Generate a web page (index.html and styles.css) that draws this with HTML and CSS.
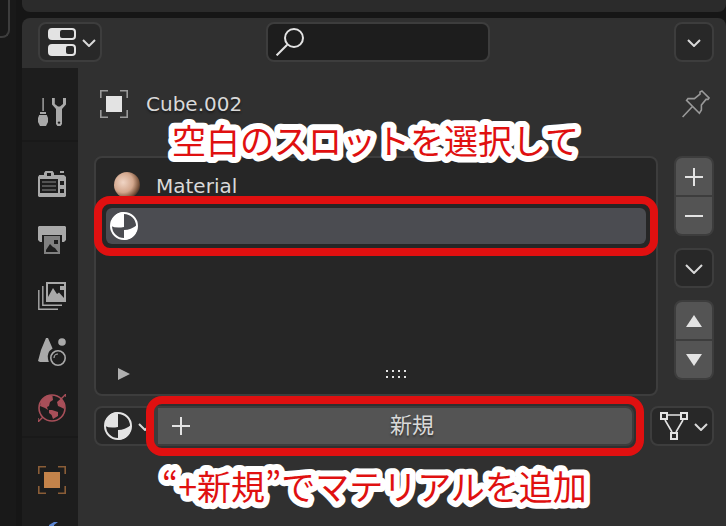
FILE: index.html
```html
<!DOCTYPE html>
<html lang="ja">
<head>
<meta charset="utf-8">
<title>Material Properties</title>
<link rel="stylesheet" href="styles.css">
</head>
<body>
<div class="app">
  <div class="side-area"><div class="side-button"></div></div>
  <div class="areas">
    <div class="upper-area"></div>
    <div class="editor">
      <header class="header">
        <div class="header-side">
          <button class="button menu-button" aria-label="Editor type">
            <svg class="icon" viewBox="0 0 14 14"><rect width="14" height="6" rx="2" fill="#e3e3e3"/><rect x="6" y="1" width="7" height="4" rx="1" fill="#282828"/><rect y="8" width="14" height="6" rx="2" fill="#e3e3e3"/><rect x="9" y="9" width="4" height="4" rx="1" fill="#282828"/></svg>
            <svg class="chevron" viewBox="0 0 14 8"><path d="M1 1l6 6 6-6"/></svg>
          </button>
        </div>
        <label class="search">
          <svg class="icon line" viewBox="0 0 14 14"><circle cx="9" cy="5" r="4.500"/><path d="M5.600 8.400L.3 13.700"/></svg>
          <input type="text" aria-label="Search">
        </label>
        <div class="header-side end">
          <button class="button square" aria-label="Options"><svg class="chevron" viewBox="0 0 14 8"><path d="M1 1l6 6 6-6"/></svg></button>
        </div>
      </header>
      <div class="body">
        <nav class="tabs">
          <div class="tab-group">
            <button class="tab" aria-label="Tool"><svg class="icon" viewBox="0 0 14 14" fill="#a9a9a9"><path d="M2.200 0h.7v6.500h-.7zM1 7h3v1H1zM.6 8.500h3.800L5 10v2l-1 2H1l-1-2v-2zM7 0h1.400v3L10 4.200h1L12.500 3V0H14v3.200L12 5.500V13l-.7 1H9.700L9 13V5.500L7 3.200z"/><circle cx="10.500" cy="12.300" r=".6" fill="#1d1d1d"/></svg></button>
          </div>
          <div class="tab-group">
            <button class="tab" aria-label="Render"><svg class="icon" viewBox="0 0 14 14" fill="#a9a9a9"><path d="M3 1.500L3.700.5h3.600L8 1.500V2.500h5l1 1V13l-.5.5H.5L0 13V3.500L.6 2.500H3zM11 .5h2v1h-2z"/><path fill="#1d1d1d" d="M4.500 1.500h2v1.500h-2zM1 4.500h9v7H1zM11 5.500h2v2h-2zM11 9.500h2v2h-2z"/><path stroke="#666" stroke-width=".7" d="M2 6h7M2 8h7M2 10h7"/></svg></button>
            <button class="tab" aria-label="Output"><svg class="icon" viewBox="0 0 14 14"><path fill="#a9a9a9" d="M.5 0h13l.5.5V7l-1 1h-1V4.500H2V8H1L0 7V.5z"/><path fill="#808080" d="M3 5h8v9H3z"/><path fill="#1d1d1d" d="M4 13v-1l2-3 1.500 1.500L8.500 11 10 13zM8 7h2v2H8z"/></svg></button>
            <button class="tab" aria-label="View layer"><svg class="icon" viewBox="0 0 14 14" fill="none" stroke="#a9a9a9"><path stroke-width=".7" d="M.4 4v9.600H10M2.400 2v9.600H12"/><path d="M4.500.5h9v9h-9z"/><path fill="#a9a9a9" stroke="none" d="M5 9V7.500L7.500 3l2 3 1-.8L13 8v1zM11 2h2v2h-2z"/></svg></button>
            <button class="tab" aria-label="Scene"><svg class="icon" viewBox="0 0 14 14" fill="#a9a9a9"><path d="M4 0h1L7.300 5.300A5 5 0 0 0 5 10.500L5.400 12H1L0 11.500 1.500 6z"/><circle cx="12" cy="2" r="1.900"/><g fill="none" stroke="#a9a9a9"><circle cx="10" cy="10" r="3.600" stroke-width=".8"/><path d="M8 10a2 2 0 0 1 2-2" stroke-width=".6"/></g></svg></button>
            <button class="tab" aria-label="World"><svg class="icon" viewBox="0 0 14 14" fill="#a84f59"><circle cx="7" cy="7" r="6.500" fill="none" stroke="#a84f59" stroke-width=".8"/><path d="M1.500 3.500L4.500.8h2.700L7.500 3 6 4l-.5 2L4.500 6.500 5 8 3.500 7 1 6zM5.500 8L7 8l3 1v2L7.500 12.500 6.800 10.500 5.500 9.500zM9.500 4l2-1.800 1.700 2.800v2.500l-2-1L10 6z"/><path fill="none" stroke="#a84f59" stroke-width=".7" d="M11.500 2.500L14 0v1.500M2.500 11.500L0 14v-2"/></svg></button>
          </div>
          <div class="tab-group">
            <button class="tab" aria-label="Object"><svg class="icon" viewBox="0 0 14 14"><path fill="#c4834a" d="M3 3h8v8H3z"/><path fill="none" stroke="#8a5d37" stroke-width=".8" d="M.4 4V.4H4M10 .4h3.600V4M13.600 10v3.600H10M4 13.600H.4V10"/></svg></button>
            <button class="tab" aria-label="Modifiers"><svg class="icon" viewBox="0 0 14 14" fill="#5b84d0"><path d="M10 0L8 0L5.500 1.500V5L0 11l2 2 6-6h3l2-2V3l-2 1H9L8 3V1.500z"/></svg></button>
          </div>
        </nav>
        <main class="content">
          <div class="object-row">
            <svg class="icon" viewBox="0 0 14 14"><path fill="#e3e3e3" d="M3 3h8v8H3z"/><path fill="none" stroke="#999" stroke-width=".8" d="M.4 4V.4H4M10 .4h3.600V4M13.600 10v3.600H10M4 13.600H.4V10"/></svg>
            <span class="object-name">Cube.002</span>
            <button class="pin" aria-label="Pin"><svg class="icon" viewBox="0 0 14 14" fill="none" stroke="#999" stroke-width=".8"><path d="M10 .5L13.500 4l-.5.7h-1L9.700 7.500V10l-1 1.600L2.300 5.200l.7-.9h3.200L9 2V1zM5 8.500L.3 13.500"/></svg></button>
          </div>
          <div class="slots">
            <div class="slot-list">
              <div class="slot">
                <svg class="icon" viewBox="0 0 14 14"><defs><radialGradient id="skin" cx=".35" cy=".4" r=".7"><stop offset="0" stop-color="#f0d5c5"/><stop offset=".55" stop-color="#d3a78d"/><stop offset=".85" stop-color="#7d573f"/><stop offset="1" stop-color="#3d2d25"/></radialGradient></defs><circle cx="6.500" cy="6.500" r="6.500" fill="url(#skin)"/></svg>
                <span>Material</span>
              </div>
              <div class="slot selected marked">
                <svg class="icon" viewBox="0 0 14 14"><circle cx="7" cy="7" r="6.500" fill="#4b4c51" stroke="#fff"/><path fill="#fff" d="M7 0v7.500Q3 8.300.5 7A6.500 6.500 0 0 1 7 0zM7 14V9q3.500 0 6.500-2.500A6.500 6.500 0 0 1 7 14z"/></svg>
              </div>
              <div class="list-footer">
                <svg class="expand" viewBox="0 0 12 12"><path fill="#b0b0b0" d="M0 0l12 6-12 6z"/></svg>
                <svg class="grip" viewBox="0 0 20 8"><path fill="#e3e3e3" d="M0 0h2v2H0zM6 0h2v2H6zM12 0h2v2h-2zM18 0h2v2h-2zM0 6h2v2H0zM6 6h2v2H6zM12 6h2v2h-2zM18 6h2v2h-2z"/></svg>
              </div>
            </div>
            <div class="slot-tools">
              <div class="stack">
                <button aria-label="Add slot"><svg class="glyph" viewBox="0 0 18 18"><path d="M9 0v18M0 9h18"/></svg></button>
                <button aria-label="Remove slot"><svg class="glyph" viewBox="0 0 18 18"><path d="M0 9h18"/></svg></button>
              </div>
              <button class="button square" aria-label="Slot specials"><svg class="chevron big" viewBox="0 0 18 10"><path d="M1 1l8 8 8-8"/></svg></button>
              <div class="stack">
                <button aria-label="Move up"><svg class="arrow" viewBox="0 0 16 12"><path d="M8 0l8 12H0z"/></svg></button>
                <button aria-label="Move down"><svg class="arrow" viewBox="0 0 16 12"><path d="M0 0h16L8 12z"/></svg></button>
              </div>
            </div>
          </div>
          <div class="material-row">
            <button class="button browse" aria-label="Browse material">
              <svg class="icon" viewBox="0 0 14 14"><circle cx="7" cy="7" r="6.500" fill="#282828" stroke="#e3e3e3"/><path fill="#e3e3e3" d="M7 0v7.500Q3 8.300.5 7A6.500 6.500 0 0 1 7 0zM7 14V9q3.500 0 6.500-2.500A6.500 6.500 0 0 1 7 14z"/></svg>
              <svg class="chevron" viewBox="0 0 14 8"><path d="M1 1l6 6 6-6"/></svg>
            </button>
            <button class="new-button marked">
              <svg class="glyph" viewBox="0 0 18 18"><path d="M9 0v18M0 9h18"/></svg>
              <span>新規</span>
            </button>
            <button class="button menu-button link-button" aria-label="Link">
              <svg class="icon line" viewBox="0 0 14 14"><path stroke-width=".8" d="M4 1.500h6M2.500 4l3.500 6M11.500 4L8 10"/><path d="M.5.5h3v3h-3zM10.500.5h3v3h-3zM5.500 10.500h3v3h-3z"/></svg>
              <svg class="chevron" viewBox="0 0 14 8"><path d="M1 1l6 6 6-6"/></svg>
            </button>
          </div>
        </main>
      </div>
    </div>
  </div>
  <svg class="caption caption-top" width="440" height="52"><text x="10" y="38">空白のスロットを選択して</text></svg>
  <svg class="caption caption-bottom" width="460" height="52"><text x="10" y="38">“+新規”でマテリアルを追加</text></svg>
</div>
</body>
</html>
```
FILE: styles.css
```css
* { box-sizing: border-box; }

body {
  margin: 0;
  background: #161616;
  color: #d9d9d9;
  font: 20px/28px "DejaVu Sans", "Noto Sans CJK JP", sans-serif;
}

button {
  margin: 0;
  padding: 0;
  border: 0;
  background: none;
  color: inherit;
  font: inherit;
}

svg { display: block; flex: none; }

.app {
  position: relative;
  display: flex;
  gap: 6px;
  height: 100vh;
  overflow: hidden;
}

.side-area { width: 16px; background: #191919; }

.side-button {
  width: 10px;
  height: 38px;
  border: 2px solid #3d3d3d;
  border-width: 0 2px 2px 0;
  border-radius: 0 0 8px 0;
}

.areas {
  flex: 1;
  display: flex;
  flex-direction: column;
  gap: 6px;
}

.upper-area {
  flex: none;
  height: 12px;
  background: #2b2b2b;
  border-radius: 0 0 8px 8px;
}

.editor {
  flex: 1;
  display: flex;
  flex-direction: column;
  min-height: 0;
  background: #303030;
  border-radius: 8px 8px 0 0;
}

.header {
  display: flex;
  padding: 4px 12px 6px 16px;
}

.header-side { flex: 1; display: flex; }
.end { justify-content: flex-end; }

.button {
  display: flex;
  align-items: center;
  justify-content: center;
  height: 40px;
  border: 2px solid #3d3d3d;
  border-radius: 8px;
  background: #282828;
}

.menu-button {
  width: 64px;
  gap: 6px;
  justify-content: flex-start;
  padding-left: 8px;
}

.square { width: 40px; }

.icon { width: 28px; height: 28px; }
.line { fill: none; stroke: #e3e3e3; }

.chevron {
  width: 14px;
  height: 8px;
  margin-top: 2px;
  fill: none;
  stroke: #d9d9d9;
  stroke-width: 2;
}

.big { width: 18px; height: 10px; }

.search {
  display: flex;
  align-items: center;
  width: 224px;
  height: 40px;
  margin-left: 4px;
  padding: 0 8px;
  border: 2px solid #3d3d3d;
  border-radius: 8px;
  background: #1d1d1d;
}

.search input {
  flex: 1;
  min-width: 0;
  border: 0;
  outline: 0;
  background: none;
  color: inherit;
  font: inherit;
}

.body { flex: 1; display: flex; min-height: 0; }

.tabs {
  width: 56px;
  padding-top: 16px;
  background: #1d1d1d;
  overflow: hidden;
}

.tab-group + .tab-group {
  padding-top: 14px;
  border-top: 2px solid #191919;
}

.tab {
  display: flex;
  align-items: center;
  width: 100%;
  height: 56px;
  padding-left: 16px;
}

.content { flex: 1; padding: 16px 12px 0 16px; }

.object-row {
  display: flex;
  align-items: center;
  gap: 18px;
  height: 40px;
  padding: 0 4px 0 6px;
  text-shadow: 0 2px 2px #1d1d1d;
}

.object-name { flex: 1; }

.slots { display: flex; gap: 16px; margin-top: 32px; }

.slot-list {
  flex: 1;
  display: flex;
  flex-direction: column;
  height: 240px;
  padding: 10px;
  border: 2px solid #3d3d3d;
  border-radius: 8px;
  background: #262626;
}

.slot {
  display: flex;
  align-items: center;
  gap: 14px;
  height: 36px;
  margin-bottom: 4px;
  padding: 0 8px;
}

.selected { padding: 0 4px; border-radius: 6px; background: #4b4c51; }

/* Red frame that calls out the step described by the caption */
.marked { position: relative; }

.marked::after {
  content: "";
  position: absolute;
  inset: -12px;
  border: 8px solid #e01010;
  border-radius: 16px;
  pointer-events: none;
}

.list-footer {
  display: grid;
  grid-template-columns: 1fr auto 1fr;
  align-items: center;
  margin-top: auto;
  padding: 0 12px;
  height: 20px;
}

.expand { width: 12px; height: 12px; }
.grip { width: 20px; height: 8px; margin-left: 40px; }

.slot-tools { display: flex; flex-direction: column; gap: 12px; }

.stack {
  display: grid;
  gap: 2px;
  width: 40px;
  height: 80px;
  border: 2px solid #3d3d3d;
  border-radius: 8px;
  background: #3d3d3d;
  overflow: hidden;
}

.stack button {
  display: flex;
  align-items: center;
  justify-content: center;
  background: #545454;
}

.glyph { width: 18px; height: 18px; stroke: #e3e3e3; stroke-width: 2; }
.arrow { width: 16px; height: 12px; fill: #e3e3e3; }

.material-row { display: flex; margin-top: 10px; }

.browse {
  width: 62px;
  gap: 6px;
  justify-content: flex-start;
  padding-left: 8px;
  border-radius: 8px 0 0 8px;
}

.new-button {
  flex: 1;
  display: grid;
  grid-template-columns: 18px 1fr;
  gap: 16px;
  align-items: center;
  height: 40px;
  padding: 0 14px;
  border: 2px solid #3d3d3d;
  border-radius: 0 8px 8px 0;
  background: #545454;
  font-size: 22px;
  text-shadow: 0 2px 2px #333;
}

.link-button { margin-left: 16px; }

.caption { position: absolute; pointer-events: none; }

.caption text {
  font: 34px "Noto Sans CJK JP", sans-serif;
  fill: #e01010;
  stroke: #fff;
  stroke-width: 12px;
  stroke-linejoin: round;
  paint-order: stroke;
}

.caption-top { left: 162px; top: 116px; }
.caption-bottom { left: 152px; top: 462px; }
```
